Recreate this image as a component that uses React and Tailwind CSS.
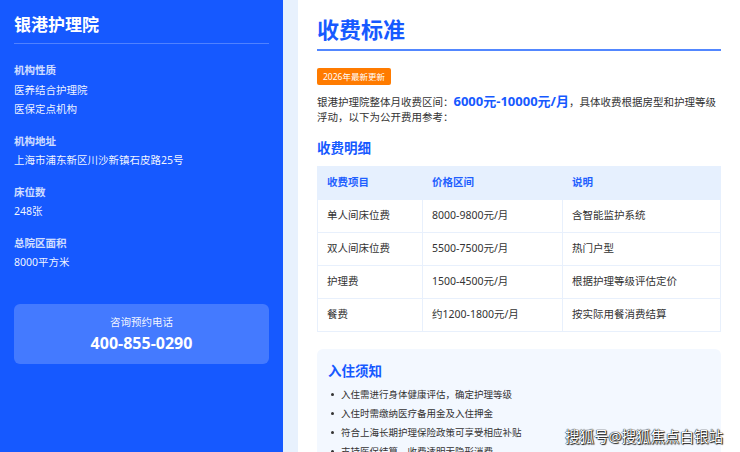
import React from "react";

const FONT = { fontFamily: '"Noto Sans", "Noto Sans CJK SC", sans-serif' };

const INFO = [
  { label: "机构性质", values: ["医养结合护理院", "医保定点机构"] },
  { label: "机构地址", values: ["上海市浦东新区川沙新镇石皮路25号"] },
  { label: "床位数", values: ["248张"] },
  { label: "总院区面积", values: ["8000平方米"] },
];

const FEES = [
  ["单人间床位费", "8000-9800元/月", "含智能监护系统"],
  ["双人间床位费", "5500-7500元/月", "热门户型"],
  ["护理费", "1500-4500元/月", "根据护理等级评估定价"],
  ["餐费", "约1200-1800元/月", "按实际用餐消费结算"],
];

const NOTES = [
  "入住需进行身体健康评估，确定护理等级",
  "入住时需缴纳医疗备用金及入住押金",
  "符合上海长期护理保险政策可享受相应补贴",
  "支持医保结算，收费透明无隐形消费",
];

const Sidebar = () => (
  <aside className="w-[283px] shrink-0 bg-[#1659ff] px-[14px] pt-[13px] text-white">
    <h1 className="border-b border-white/25 pb-[6px] text-[17px] font-bold leading-[24px]">
      银港护理院
    </h1>

    <div className="mt-[17px] flex flex-col gap-[12px]">
      {INFO.map((s) => (
        <div key={s.label}>
          <div className="text-[10.5px] font-bold leading-[19.5px] text-white/80">
            {s.label}
          </div>
          {s.values.map((v) => (
            <div key={v} className="text-[10.5px] leading-[19.5px] text-white/95">
              {v}
            </div>
          ))}
        </div>
      ))}
    </div>

    {/* phone card */}
    <div className="mt-[31px] rounded-[6px] bg-white/20 pb-[9px] pt-[9px] text-center">
      <div className="text-[10.5px] leading-[18px] text-white/95">咨询预约电话</div>
      <div className="text-[16px] font-bold leading-[24px]">400-855-0290</div>
    </div>
  </aside>
);

const FeeTable = () => (
  <table className="mt-[8px] w-full border-collapse text-[10.5px]">
    <thead>
      <tr className="bg-[#e6f0fe] text-[#1f5fff]">
        <th className="h-[33px] w-[105px] border border-[#e6f0fe] pl-[9px] text-left font-bold">收费项目</th>
        <th className="w-[140px] border border-[#e6f0fe] pl-[9px] text-left font-bold">价格区间</th>
        <th className="border border-[#e6f0fe] pl-[9px] text-left font-bold">说明</th>
      </tr>
    </thead>
    <tbody className="text-[#333]">
      {FEES.map((r) => (
        <tr key={r[0]}>
          {r.map((c, i) => (
            <td key={i} className="h-[33px] border border-[#e8f0fc] pl-[9px]">
              {c}
            </td>
          ))}
        </tr>
      ))}
    </tbody>
  </table>
);

export default function App() {
  return (
    <div className="relative flex h-[452px] overflow-hidden bg-[#e8f1fd]" style={FONT}>
      <Sidebar />

      <main className="ml-[15px] flex-1 bg-white px-[19px] pt-[13px]">
        <h2 className="border-b-2 border-[#5287ff] pb-[4px] text-[22px] font-bold leading-[32px] text-[#1659ff]">
          收费标准
        </h2>

        <span className="mt-[17px] inline-block rounded-[2px] bg-[#ff7b00] px-[6px] text-[8.5px] leading-[17px] text-white">
          2026年最新更新
        </span>

        <p className="mt-[8px] text-[10.5px] leading-[15px] text-[#333]">
          银港护理院整体月收费区间：
          <span className="text-[13px] font-bold text-[#1659ff]">6000元-10000元/月</span>
          ，具体收费根据房型和护理等级浮动，以下为公开费用参考：
        </p>

        <h3 className="mt-[13px] text-[13.5px] font-bold leading-[20px] text-[#1659ff]">收费明细</h3>

        <FeeTable />

        <section className="mt-[17px] rounded-[6px] bg-[#f3f8ff] px-[11px] pt-[12px] pb-[12px]">
          <h4 className="text-[13.5px] font-bold leading-[20px] text-[#1659ff]">入住须知</h4>
          <ul className="mt-[4px] flex flex-col">
            {NOTES.map((n) => (
              <li key={n} className="flex items-center text-[9.5px] leading-[19px] text-[#333]">
                <span className="ml-[3px] mr-[7px] h-[3px] w-[3px] rounded-full bg-[#333]" />
                {n}
              </li>
            ))}
          </ul>
        </section>
      </main>

      {/* watermark */}
      <div
        className="absolute bottom-[6px] right-[17px] text-[14.5px] leading-[20px] text-white"
        style={{ textShadow: "0 0 1px #000, 0 0 1px #000, 1px 1px 1px #222" }}
      >
        搜狐号@搜狐焦点白银站
      </div>
    </div>
  );
}
